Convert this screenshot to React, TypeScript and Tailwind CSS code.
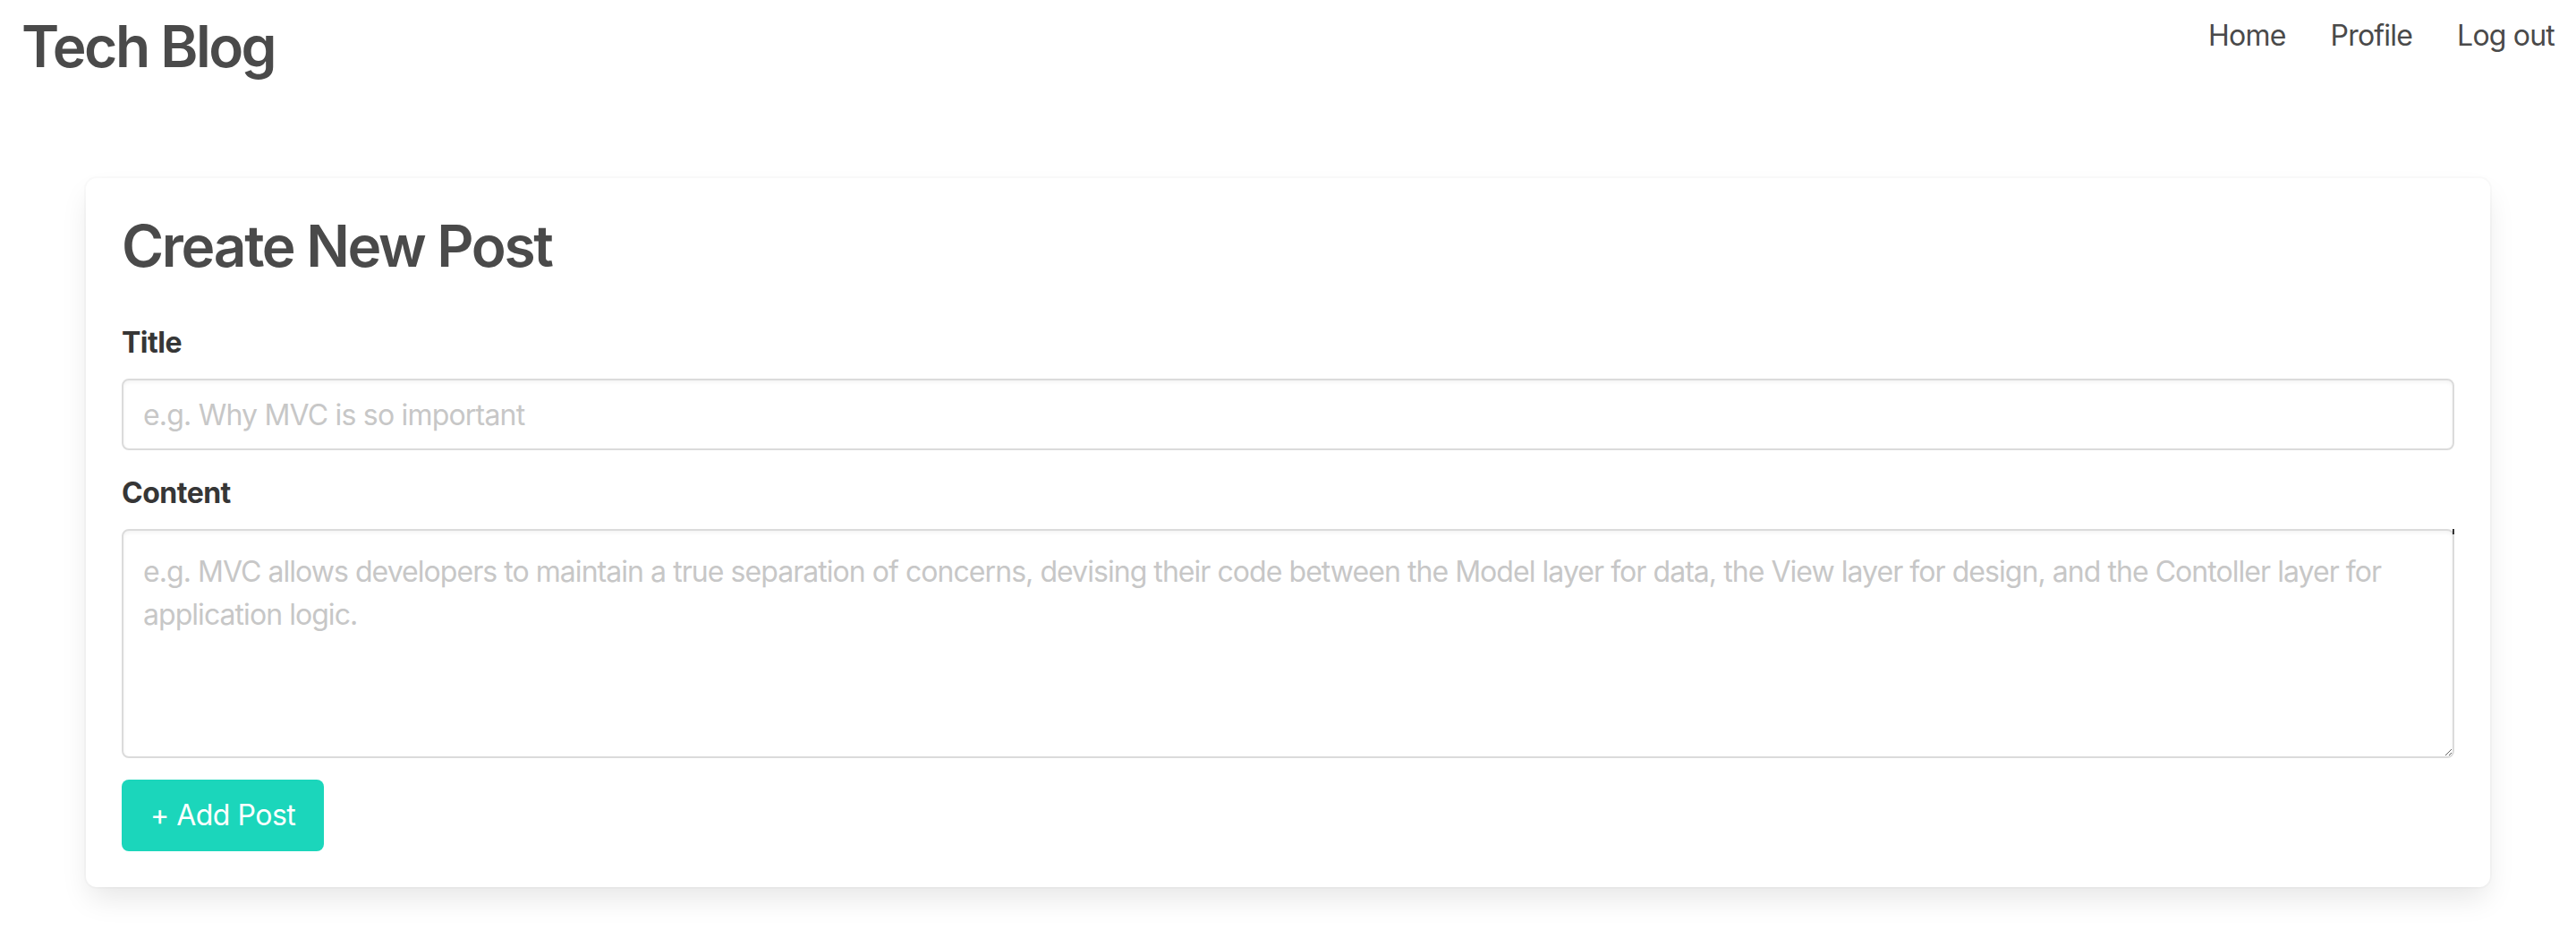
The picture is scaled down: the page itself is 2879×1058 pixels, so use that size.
import React from "react";

const font = { fontFamily: "Inter, 'Noto Sans', sans-serif" };

export default function App() {
  return (
    <div className="min-h-[1058px] bg-white text-[#4a4a4a]" style={font}>
      <header className="flex items-start justify-between px-[24px] pt-[16px]">
        <h1 className="text-[64px] leading-[72px] font-semibold text-[#4a4a4a] tracking-[-2.5px]">Tech Blog</h1>
        <nav className="flex gap-[50px] text-[32px] leading-[48px] text-[#4a4a4a] tracking-[-0.8px]">
          <a href="#">Home</a>
          <a href="#">Profile</a>
          <a href="#">Log out</a>
        </nav>
      </header>
      <main className="px-[96px] pt-[111px]">
        <div className="rounded-[12px] bg-white p-[40px] shadow-[0_16px_32px_-4px_rgba(10,10,10,0.1),0_0_0_2px_rgba(10,10,10,0.02)]">
          <h2 className="mb-[48px] text-[64px] leading-[72px] font-semibold text-[#4a4a4a] tracking-[-2.3px]">Create New Post</h2>
          <div className="mb-[24px]">
            <label className="mb-[16px] block text-[32px] leading-[48px] font-bold text-[#363636] tracking-[-0.5px]">Title</label>
            <input
              className="block h-[80px] w-full rounded-[8px] border-2 border-[#dbdbdb] px-[22px] text-[32px] text-[#363636] shadow-[inset_0_2px_4px_rgba(10,10,10,0.05)] outline-none placeholder:text-[#c7c7c7] tracking-[-0.8px]"
              placeholder="e.g. Why MVC is so important"
            />
          </div>
          <div className="mb-[24px]">
            <label className="mb-[16px] block text-[32px] leading-[48px] font-bold text-[#363636] tracking-[-0.5px]">Content</label>
            <div className="relative">
              <textarea
                className="block h-[256px] w-full resize-y rounded-[8px] border-2 border-[#dbdbdb] px-[22px] py-[22px] text-[32px] leading-[48px] text-[#363636] shadow-[inset_0_2px_4px_rgba(10,10,10,0.05)] outline-none placeholder:text-[#c7c7c7] tracking-[-0.95px]"
                placeholder="e.g. MVC allows developers to maintain a true separation of concerns, devising their code between the Model layer for data, the View layer for design, and the Contoller layer for application logic."
              />
              <span className="absolute right-0 top-0 h-[6px] w-[2px] bg-[#333]" />
            </div>
          </div>
          <button className="h-[80px] rounded-[8px] bg-[#1bd6bb] px-[32px] text-[32px] text-white tracking-[-0.5px]">+ Add Post</button>
        </div>
      </main>
    </div>
  );
}
